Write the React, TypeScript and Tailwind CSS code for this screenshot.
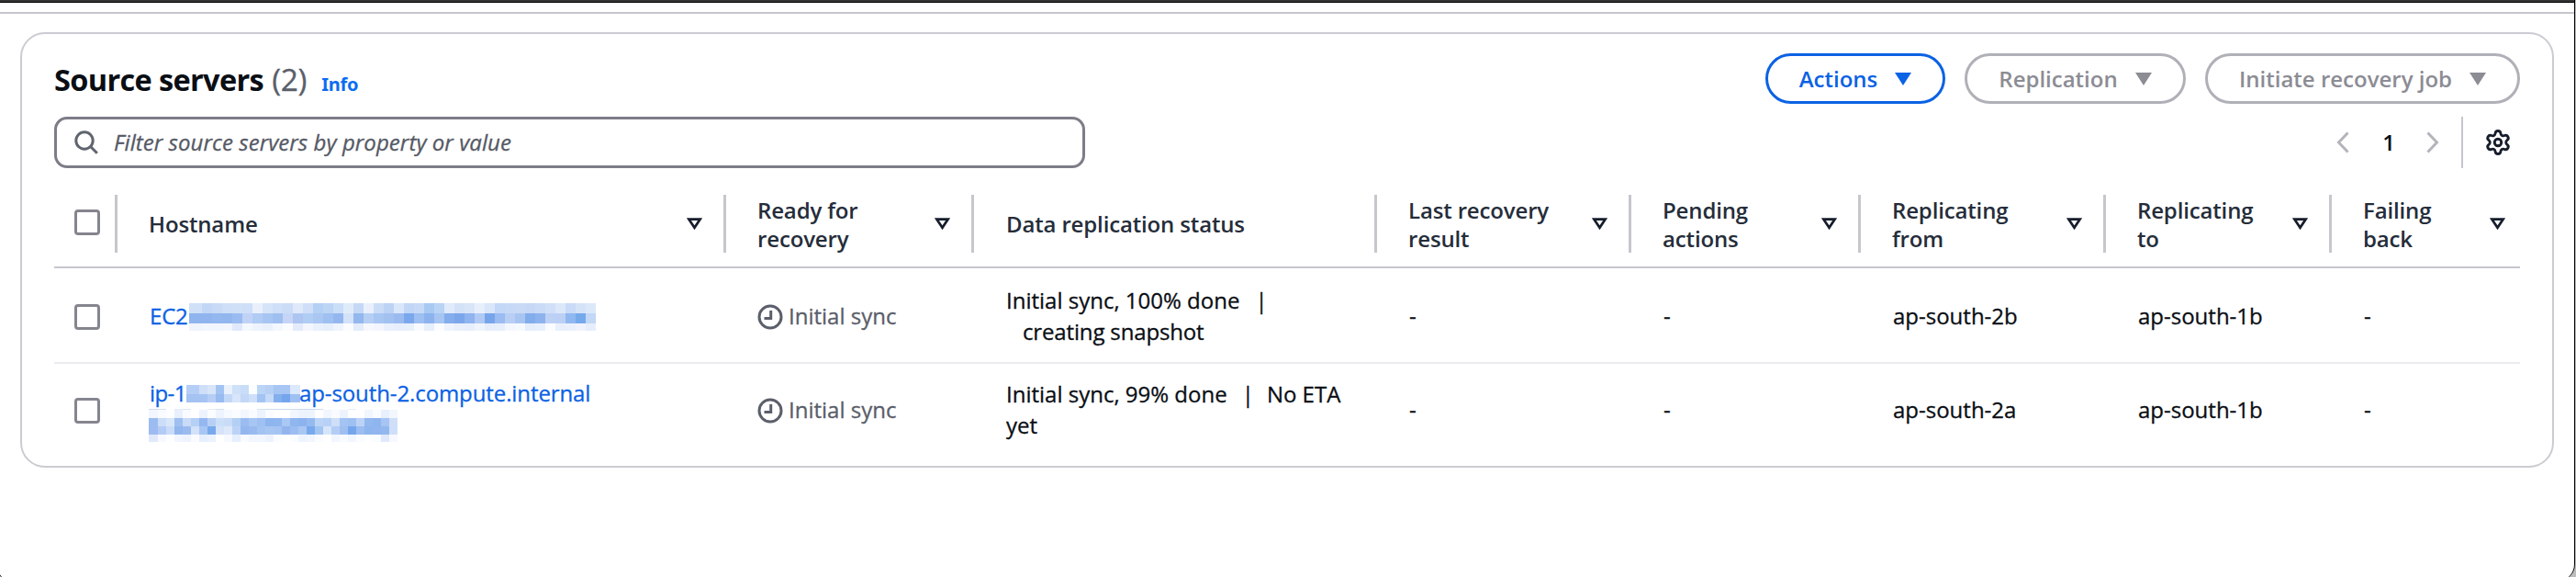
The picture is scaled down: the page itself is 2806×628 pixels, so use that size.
import type { ReactNode } from "react";
import { Settings } from "lucide-react";

const GRID =
  "grid grid-cols-[69px_663px_270px_439px_277px_250px_267px_246px_205px]";

type Band = { y: number; height: number; colors: string };

/** Pixelated strip that hides part of a host name. */
function Redaction({
  width,
  height,
  cell,
  lead,
  bands,
}: {
  width: number;
  height: number;
  cell: number;
  lead: number;
  bands: Band[];
}) {
  return (
    <svg width={width} height={height} shapeRendering="crispEdges" className="block shrink-0" aria-hidden>
      {bands.flatMap((band) => {
        const colors = band.colors.split(" ");
        return colors.map((color, i) => {
          const x = i === 0 ? 0 : lead + i * cell;
          const end = i === colors.length - 1 ? width : lead + (i + 1) * cell;
          return (
            <rect key={`${band.y}-${i}`} x={x} y={band.y} width={end - x} height={band.height} fill={`#${color}`} />
          );
        });
      })}
    </svg>
  );
}

const EC2_BANDS: Band[] = [
  {
    y: 0,
    height: 11,
    colors:
      "d0e0f7 c2d6f6 c8daf6 cfdff7 d0e0f7 cfdff8 e9f0fc d6e4f9 cfdff8 cbdcf6 e0e9fa cfdff8 b4d0f4 bcd5f5 cbdef7 e0ebfa c5d9f6 e9f0fc cbdcf7 bdd3f5 dae6fa c2d6f6 c6d9f6 a8c9f2 b8d3f4 e0eafa d4e2f8 d8e5f9 e8effc dae6fa c3d7f7 c6d9f6 c8daf6 c6d8f6 cadbf7 d1e0f8 dce8fa c9dbf6 d5e3f8 dce8fa",
  },
  {
    y: 11,
    height: 11,
    colors:
      "8fb4ee 90b5ee 93b7ef 92b6ee 9bbcf0 c0d3f6 b0cbf4 a7c5f2 9fbff1 c6d5f6 aec5f2 b0cdf4 a9c7f2 9fc0f1 94b7ef d3e1f9 93b7ee b5cff4 a8c6f2 a2c1f1 9bbbf0 7ba8ec 9dbff1 8db3ee a6c5f2 83adec 7ba6eb 8fb4ef b0caf4 77a5eb 9bbcf1 b8cef5 a8c5f2 81adec 8db2ee bdd1f5 bcd0f5 8fb8f0 76a9ec c3d7f6",
  },
  {
    y: 22,
    height: 8,
    colors:
      "eff4fd f3f6fe f2f6fe f3f6fe e0e9fb f5f8fe eef3fd eaf1fd f3f7fe fbfcff e3ebfb f3f6fe e9f1fc e6effc f0f4fd fbfcff e3ecfb f6f8fe f3f6fe eaf0fd e8effc e8f0fc f8faff e6effc fbfcff eef3fd e9f0fc e8effc f0f4fd e6eefc e8effc f4f7fe f6f9fe e6eefc e9f0fd fbfcff e9f0fc eaf1fd f0f3fd e6eefc",
  },
];

const IP_BANDS: Band[] = [
  { y: 0, height: 10, colors: "b5cef5 cfdff8 d8e5f9 a3c3f2 e9f1fd cfe0f9 c9dcf8 fbfdff bcd4f6 b5cff5 a8c6f3 a8c6f3 dce8fb" },
  { y: 10, height: 9, colors: "a4c2f2 a6c4f3 b6cef5 98bbf0 c3d8f7 d8e5fa c3d7f7 cfdffa a3c3f2 c6daf8 84afee 75a5ec 9fc0f2" },
];

const SUFFIX_BANDS: Band[] = [
  {
    y: 0,
    height: 1,
    colors:
      "cfdcf0 d6e2f3 fdfeff e6edf8 dde6f4 fdfeff fdfeff e6edf8 d6e2f3 fdfeff fdfeff fdfeff fdfeff d6e2f3 cfdcf0 c9d8ef c9d8ef cfdcf0 c9d8ef c9d8ef cfdcf0 fdfeff fdfeff fdfeff e6edf8 fdfeff fdfeff fdfeff fdfeff fdfeff",
  },
  {
    y: 1,
    height: 9,
    colors:
      "f2f6fe f9fbff fdfeff e8f0fd f9fbff ffffff edf3fd fafcff eef4fe f6f9ff fafcff f2f6fe f9fbff edf3fd fafcff ffffff ffffff f2f6fe edf3fd eef4fe ffffff f2f6fe f9fbff edf3fd ffffff ffffff f2f6fe fafcff e8f0fd f2f6fe",
  },
  {
    y: 10,
    height: 9,
    colors:
      "9bbcf1 ccddf8 d8e6fa 9fbff1 c9dbf7 b5d0f5 93b7ef b8cff5 cbe0f8 c9dcf7 b3cff4 9abcf1 a7c6f3 9fc0f1 8fb5ef 90b6ef a9c8f3 90b6ef 8db3ee 95baf0 bcd5f6 b8d1f6 cfdff8 a3c3f2 9fc1f2 bdd3f6 93b8ef 8fb5ef a7c4f2 d0dff8",
  },
  {
    y: 19,
    height: 9,
    colors:
      "9dbbf0 b3cbf5 cadbf8 93b6ee 9bbbf0 d3e1f9 a8c6f3 78a9ed d6e2f8 dde9fa bcd3f6 94b7ef 98baf0 a3c3f2 a7c6f3 a5c4f2 92b5ee 9bbdf1 a9c7f3 78a9ed a3c5f2 d6e5fa b3cdf5 9fbff1 75a6ec 9bbdf1 8fb5ef 90b5ef 93b8f0 cfdffa",
  },
  {
    y: 28,
    height: 8,
    colors:
      "e0e9fb f6f9ff fdfeff f2f6fe eef3fd f9fbff e6effd ebf2fd ffffff f6f9ff e6effd f9fbff f2f6fe f2f6fe edf3fd fafcff ffffff fafcff eef4fe f2f6fe fafcff ffffff f2f6fe f9fbff f2f6fe fafcff fdfeff fafcff e0e9fb f6f9ff",
  },
];

function Checkbox() {
  return <span className="mt-px ml-[22px] block size-[28px] rounded-[4px] border-[3px] border-[#85858f] bg-white" />;
}

function SortIcon({ last = false }: { last?: boolean }) {
  return (
    <svg width="17" height="14" viewBox="0 0 17 14" className={`mt-px block shrink-0 ${last ? "mr-[16px]" : "mr-[23px]"}`} aria-hidden>
      <path d="M2.3 1.6h12.4L8.5 10.8z" fill="none" stroke="#161d2b" strokeWidth="2.7" />
    </svg>
  );
}

function SyncStatus() {
  return (
    <span className="flex items-center text-[#5a5e6a]">
      <svg width="28" height="28" viewBox="0 0 28 28" className="mt-px mr-[6px] -ml-px block" fill="none" stroke="#5b5f6b" strokeWidth="3" aria-hidden>
        <circle cx="14" cy="14" r="12" />
        <path d="M14.7 7v8.4H7.5" />
      </svg>
      Initial sync
    </span>
  );
}

function HeaderCell({ children, sortable = true, last = false }: { children: ReactNode; sortable?: boolean; last?: boolean }) {
  return (
    <div className="flex items-center justify-between">
      <span className={`leading-[31px] font-semibold tracking-[-0.15px] text-[#252d3a] ${sortable ? "pl-[34px]" : "pl-[35px]"}`}>
        {children}
      </span>
      <span className="flex items-center">
        {sortable && <SortIcon last={last} />}
        {!last && <span className="block h-[63px] w-[3px] bg-[#c6c6cd]" />}
      </span>
    </div>
  );
}

function Cell({ children }: { children: ReactNode }) {
  return <div className="flex items-center pl-[35px]">{children}</div>;
}

function MenuButton({ children, width, active = false }: { children: ReactNode; width: string; active?: boolean }) {
  return (
    <button
      className={`flex h-[55px] items-center justify-center rounded-full border-[3px] font-semibold ${width} ${
        active ? "border-[#0b62e4] text-[#0b62e4]" : "border-[#b0b0b8] text-[#8c8c94]"
      }`}
    >
      <span className="pt-px">{children}</span>
      <svg width="18" height="14" viewBox="0 0 18 14" className="ml-[19px] block" aria-hidden>
        <path d="M0 0h18L9 14z" fill="currentColor" />
      </svg>
    </button>
  );
}

function ServerRow({ host, status, from, divider }: { host: ReactNode; status: ReactNode; from: string; divider?: boolean }) {
  return (
    <div
      className={`${GRID} text-[#0a0e14] [-webkit-text-stroke:0.3px] ${
        divider ? "h-[104px] border-b-2 border-[#ebebf0] pt-[2px]" : "h-[100px]"
      }`}
    >
      <div className="flex items-center">
        <Checkbox />
      </div>
      <Cell>{host}</Cell>
      <Cell>
        <SyncStatus />
      </Cell>
      <Cell>{status}</Cell>
      <Cell>-</Cell>
      <Cell>-</Cell>
      <Cell>{from}</Cell>
      <Cell>ap-south-1b</Cell>
      <Cell>-</Cell>
    </div>
  );
}

export default function App() {
  return (
    <div className="h-[628px] w-[2806px] overflow-hidden bg-[#bdbdbd] font-['Open_Sans',sans-serif] text-[24px] leading-[34.4px]">
      <div className="-ml-[5px] h-[632px] w-[2810px] overflow-hidden rounded-b-[18px] border-r border-l border-black bg-white pl-[4px]">
        <div className="h-[3px] border-b border-black bg-[#333333]" />
        <div className="mt-[10px] h-[2px] bg-[#c6c6cd]" />

        <section className="mt-[20px] ml-[22px] h-[474px] w-[2760px] rounded-[27px] border-2 border-[#cbcbd2] pt-[21px] pl-[35px]">
          <div className="w-[2686px]">
            <header className="flex h-[55px] items-center justify-between">
              <div className="flex items-baseline pt-[8px]">
                <h2 className="text-[32.5px] font-bold tracking-[-0.65px] text-[#0a0e14]">Source servers</h2>
                <span className="ml-[9px] text-[33.5px] tracking-[-0.3px] text-[#5a5e6a] [-webkit-text-stroke:0.3px]">(2)</span>
                <a className="ml-[16px] font-['Noto_Sans',sans-serif] text-[20px] font-bold tracking-[-0.2px] text-[#0b6cf0]">Info</a>
              </div>
              <div className="flex gap-[21px]">
                <MenuButton width="w-[196px]" active>
                  Actions
                </MenuButton>
                <MenuButton width="w-[241px]">Replication</MenuButton>
                <MenuButton width="w-[343px]">Initiate recovery job</MenuButton>
              </div>
            </header>

            <div className="mt-[14px] flex h-[56px] items-center justify-between">
              <div className="flex h-[56px] w-[1123px] items-center rounded-[14px] border-[3px] border-[#7d7d88] pl-[19px]">
                <svg width="27" height="27" viewBox="0 0 27 27" fill="none" stroke="#60646f" strokeWidth="3" className="block" aria-hidden>
                  <circle cx="11" cy="11" r="9.2" />
                  <path d="M17.3 17.3l7.5 7.5" />
                </svg>
                <span className="ml-[16px] tracking-[0.06px] text-[#555965] italic [-webkit-text-stroke:0.3px]">
                  Filter source servers by property or value
                </span>
              </div>
              <div className="flex h-[56px] items-center">
                <svg width="14" height="24" viewBox="0 0 14 24" fill="none" stroke="#b4b4bb" strokeWidth="3" className="block" aria-hidden>
                  <path d="M12.5 1.5L2.5 12l10 10.5" />
                </svg>
                <span className="ml-[35px] w-[16px] text-center font-semibold text-[#0a0e14]">1</span>
                <svg width="14" height="24" viewBox="0 0 14 24" fill="none" stroke="#b4b4bb" strokeWidth="3" className="ml-[33px] block" aria-hidden>
                  <path d="M1.5 1.5l10 10.5-10 10.5" />
                </svg>
                <span className="ml-[24px] block h-[56px] w-[2px] bg-[#c6c6cd]" />
                <Settings size={30} strokeWidth={2.3} color="#161d2b" className="mr-[9px] ml-[23px] block" />
              </div>
            </div>

            <div className={`${GRID} mt-[14px] h-[95px] border-b-2 border-[#c6c6cd]`}>
              <div className="flex items-center justify-between">
                <span className="-mt-[4px]">
                  <Checkbox />
                </span>
                <span className="block h-[63px] w-[3px] bg-[#c6c6cd]" />
              </div>
              <HeaderCell>Hostname</HeaderCell>
              <HeaderCell>
                Ready for
                <br />
                recovery
              </HeaderCell>
              <HeaderCell sortable={false}>Data replication status</HeaderCell>
              <HeaderCell>
                Last recovery
                <br />
                result
              </HeaderCell>
              <HeaderCell>
                Pending
                <br />
                actions
              </HeaderCell>
              <HeaderCell>
                Replicating
                <br />
                from
              </HeaderCell>
              <HeaderCell>
                Replicating
                <br />
                to
              </HeaderCell>
              <HeaderCell last>
                Failing
                <br />
                back
              </HeaderCell>
            </div>

            <ServerRow
              divider
              host={
                <a className="flex items-center text-[#0b62e4]">
                  <span className="w-[43px] tracking-[-0.2px] whitespace-nowrap">EC2</span>
                  <span className="pt-[2px]">
                    <Redaction width={443} height={30} cell={11} lead={3} bands={EC2_BANDS} />
                  </span>
                </a>
              }
              status={
                <span>
                  Initial sync, 100% done<span className="ml-[17px]">|</span>
                  <br />
                  <span className="ml-[18px] tracking-[-0.15px]">creating snapshot</span>
                </span>
              }
              from="ap-south-2b"
            />
            <ServerRow
              host={
                <a className="block text-[#0b62e4]">
                  <span className="flex h-[34px] items-center">
                    <span className="w-[40px] tracking-[-0.6px] whitespace-nowrap">ip-1</span>
                    <Redaction width={124} height={19} cell={9} lead={5} bands={IP_BANDS} />
                    <span className="-ml-px tracking-[-0.1px]">ap-south-2.compute.internal</span>
                  </span>
                  <span className="-ml-px flex h-[36px] items-center">
                    <Redaction width={271} height={36} cell={9} lead={1} bands={SUFFIX_BANDS} />
                  </span>
                </a>
              }
              status={
                <span>
                  Initial sync, 99% done<span className="mr-[14px] ml-[16px]">|</span>No ETA
                  <br />
                  yet
                </span>
              }
              from="ap-south-2a"
            />
          </div>
        </section>
      </div>
    </div>
  );
}
